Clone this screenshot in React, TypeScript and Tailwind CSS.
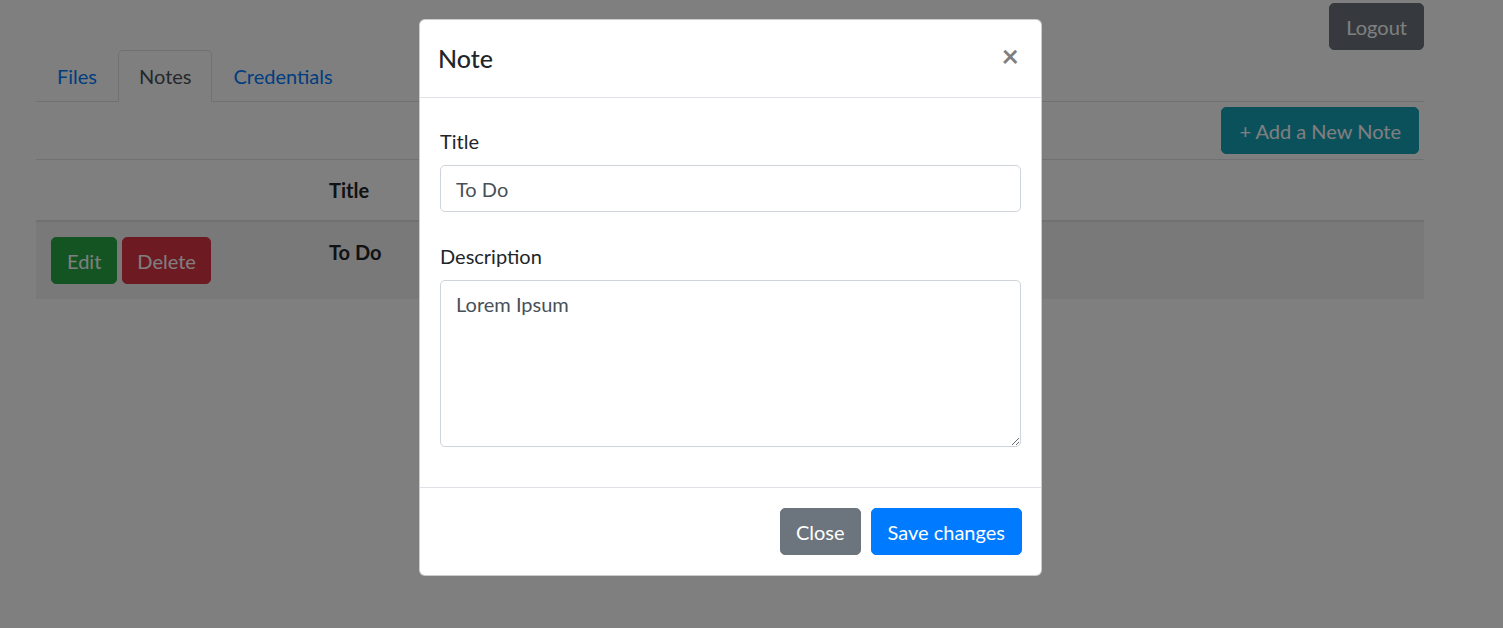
import React from "react";

export default function App() {
  return (
    <div className="relative h-[628px] w-[1503px] overflow-hidden bg-white font-['Lato',sans-serif] text-[20px] leading-[30px] text-[#212529]">
      {/* Page */}
      <div className="ml-[36px] w-[1388px]">
        <div className="flex justify-end pt-[3px]">
          <button className="h-[47px] rounded-[5px] border border-[#6c757d] bg-[#6c757d] px-[16px] text-white">
            Logout
          </button>
        </div>

        <ul className="flex border-b border-[#dee2e6]">
          <li className="-mb-px rounded-t-[5px] border border-transparent px-[20px] py-[10px] text-[#007bff]">Files</li>
          <li className="-mb-px rounded-t-[5px] border border-[#dee2e6] border-b-white bg-white px-[20px] py-[10px] text-[#495057]">
            Notes
          </li>
          <li className="-mb-px rounded-t-[5px] border border-transparent px-[20px] py-[10px] text-[#007bff]">Credentials</li>
        </ul>

        <div className="flex justify-end p-[5px]">
          <button className="h-[47px] rounded-[5px] border border-[#17a2b8] bg-[#17a2b8] px-[17px] text-white">
            + Add a New Note
          </button>
        </div>

        <div className="border-t border-[#dee2e6]">
          <div className="grid grid-cols-[278px_1fr] border-b-2 border-[#dee2e6]">
            <div className="p-[15px]"></div>
            <div className="p-[15px] font-bold">Title</div>
          </div>
          <div className="grid grid-cols-[278px_1fr] bg-black/5">
            <div className="flex gap-[5px] p-[15px]">
              <button className="h-[47px] rounded-[5px] border border-[#28a745] bg-[#28a745] px-[15px] text-white">Edit</button>
              <button className="h-[47px] rounded-[5px] border border-[#dc3545] bg-[#dc3545] px-[14px] text-white">Delete</button>
            </div>
            <div className="p-[15px] font-bold">To Do</div>
          </div>
        </div>
      </div>

      {/* Backdrop */}
      <div className="absolute inset-0 bg-[rgba(0,0,0,0.5)]"></div>

      {/* Modal */}
      <div className="absolute left-[419px] top-[19px] w-[623px] rounded-[6px] border border-black/20 bg-white">
        <div className="flex items-start border-b border-[#dee2e6] py-[20px] pl-[18px] pr-[20px]">
          <h5 className="text-[25px] font-medium leading-[37px]">Note</h5>
          <button className="-my-[20px] -mr-[18px] ml-auto px-[20px] pb-[20px] pt-[17px] text-[30px] font-bold leading-[37px] text-black opacity-50">
            ×
          </button>
        </div>

        <div className="px-[20px] pb-[40px] pt-[28px]">
          <label className="mb-[9px] block">Title</label>
          <input
            type="text"
            defaultValue="To Do"
            className="block h-[47px] w-full rounded-[5px] border border-[#ced4da] px-[15px] text-[#495057] outline-none"
          />
          <label className="mb-[9px] mt-[29px] block">Description</label>
          <textarea
            defaultValue="Lorem Ipsum"
            className="block h-[167px] w-full rounded-[5px] border border-[#ced4da] px-[15px] py-[7.5px] text-[#495057] outline-none"
          />
        </div>

        <div className="flex justify-end gap-[10px] border-t border-[#dee2e6] py-[20px] pl-[20px] pr-[19px]">
          <button className="h-[47px] rounded-[5px] border border-[#6c757d] bg-[#6c757d] px-[15px] text-white">Close</button>
          <button className="h-[47px] rounded-[5px] border border-[#007bff] bg-[#007bff] px-[16px] text-white">Save changes</button>
        </div>
      </div>
    </div>
  );
}
